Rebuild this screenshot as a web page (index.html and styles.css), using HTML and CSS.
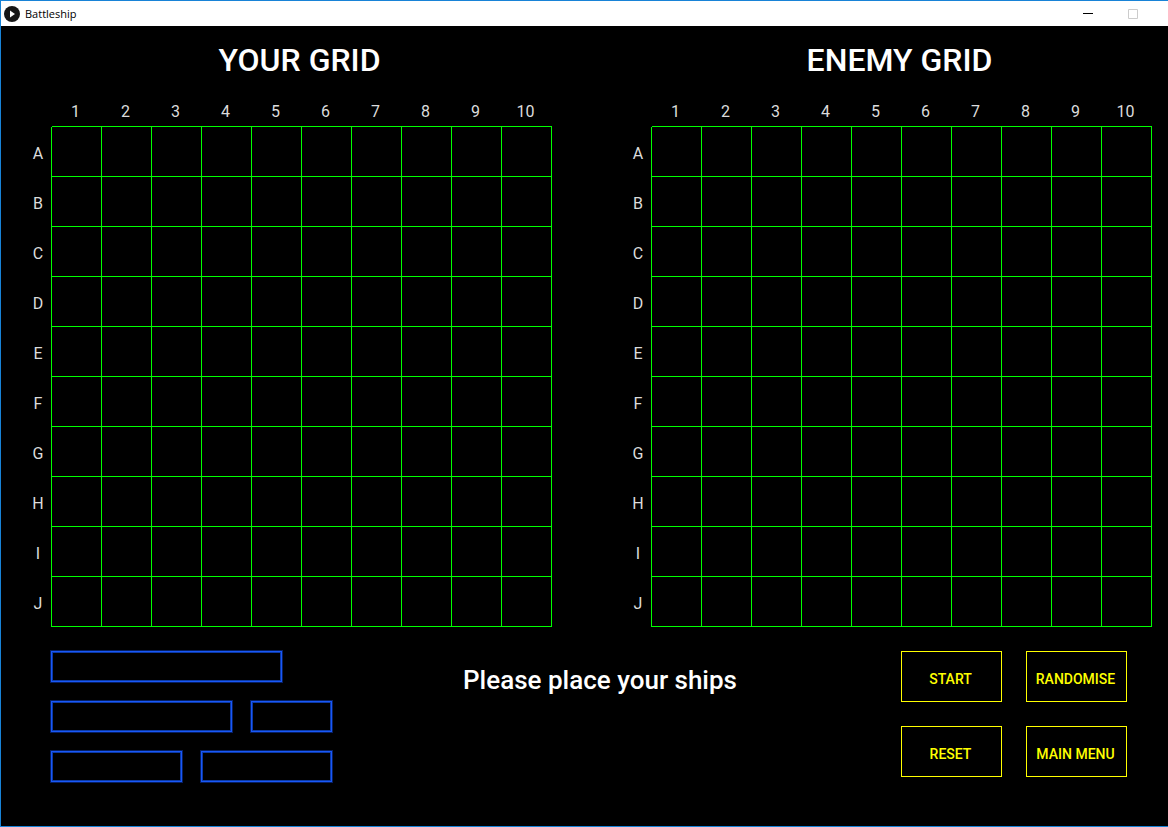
FILE: index.html
```html
<!DOCTYPE html>
<html lang="en">
<head>
<meta charset="utf-8">
<title>Battleship</title>
<link rel="stylesheet" href="styles.css">
</head>
<body>
<div class="window">
  <header class="titlebar">
    <svg class="app-icon" viewBox="0 0 16 16" aria-hidden="true"><circle cx="8" cy="8" r="8" fill="#161616"/><path d="M6 4.500v7l5-3.500z" fill="#fff"/></svg>
    <h1 class="app-name">Battleship</h1>
    <button class="window-button" type="button" aria-label="Minimise"><svg viewBox="0 0 10 10" aria-hidden="true"><path d="M0 4.500h10" stroke="#000"/></svg></button>
    <button class="window-button" type="button" aria-label="Maximise" disabled><svg viewBox="0 0 10 10" aria-hidden="true"><path d="M.5.5h9v9h-9z" fill="none" stroke="#ccc"/></svg></button>
  </header>
  <main>
    <div class="boards">
      <section class="board"><h2 class="board-title">YOUR GRID</h2><table class="grid"></table></section>
      <section class="board"><h2 class="board-title">ENEMY GRID</h2><table class="grid"></table></section>
    </div>
    <div class="controls">
      <div class="fleet">
        <div class="fleet-row"><div class="ship ship-5"></div></div>
        <div class="fleet-row"><div class="ship ship-4"></div><div class="ship ship-2"></div></div>
        <div class="fleet-row"><div class="ship ship-3"></div><div class="ship ship-3"></div></div>
      </div>
      <p class="message">Please place your ships</p>
      <div class="actions">
        <button class="action" type="button">START</button>
        <button class="action" type="button">RANDOMISE</button>
        <button class="action" type="button">RESET</button>
        <button class="action" type="button">MAIN MENU</button>
      </div>
    </div>
  </main>
</div>
<script src="board.js"></script>
</body>
</html>
```
FILE: styles.css
```css
* { box-sizing: border-box; }
body { margin: 0; background: #000; font-family: Roboto, "Liberation Sans", sans-serif; }
h1, h2, p { margin: 0; font-weight: 400; }
button { font: inherit; }
.window { min-height: 100vh; border: 1px solid #1883d7; border-right: 0; background: #000; }
.titlebar { display: flex; align-items: center; height: 25px; padding: 0 13px 0 3px; background: #fff; }
.app-icon { width: 16px; height: 16px; }
.app-name { flex: 1; padding-left: 5px; font: 11px "Open Sans", "Noto Sans", sans-serif; color: #000; }
.window-button { display: grid; place-items: center; width: 45px; height: 24px; padding: 0; border: 0; background: none; }
.window-button svg { width: 10px; height: 10px; }
.boards { display: grid; grid-template-columns: 1fr 1fr; gap: 49px; padding-right: 16px; }
.board-title { padding-left: 46px; font-size: 32px; font-weight: 500; line-height: 68px; text-align: center; color: #fff; }
.grid { width: 100%; border-spacing: 0; table-layout: fixed; color: #dcdcdc; font-size: 16px; line-height: 16px; }
.grid th { padding: 0; font-weight: 400; }
.grid thead th { height: 33px; padding: 3px 3px 0 0; border-bottom: 1px solid #0f0; }
.grid thead .corner { width: 51px; border-bottom: 0; }
.grid tbody th { height: 50px; padding: 4px 0 0 24px; text-align: center; border-right: 1px solid #0f0; }
.grid td { padding: 0; border: solid #0f0; border-width: 0 1px 1px 0; }
.controls { display: grid; grid-template-columns: 1fr auto 1fr; padding: 24px 41px 24px 50px; }
.fleet { display: grid; align-content: start; gap: 19px; }
.fleet-row { display: flex; gap: 19px; }
.ship { height: 31px; border: 1px solid #1858f8; box-shadow: 0 0 0 1px #081f60, inset 0 0 0 1px #0e3aa4; }
.ship-5 { width: 231px; }
.ship-4 { width: 181px; }
.ship-3 { width: 131px; }
.ship-2 { width: 81px; }
.message { padding: 13px 0 0 22px; font-size: 26px; font-weight: 500; line-height: 32px; color: #fff; }
.actions { display: grid; grid-template-columns: 101px 101px; justify-content: end; align-content: start; gap: 24px; }
.action { height: 51px; padding: 4px 2px 0 0; border: 1px solid #ff0; background: #000; color: #ff0; font-size: 14px; font-weight: 500; }
```
FILE: board.js
```javascript
const columns = [1, 2, 3, 4, 5, 6, 7, 8, 9, 10];
const head = columns.map((n) => `<th scope="col">${n}</th>`).join("");
const rows = [..."ABCDEFGHIJ"]
  .map((r) => `<tr><th scope="row">${r}</th>${"<td></td>".repeat(columns.length)}</tr>`)
  .join("");
document.querySelectorAll(".grid").forEach((grid) => {
  grid.innerHTML = `<thead><tr><th class="corner"></th>${head}</tr></thead><tbody>${rows}</tbody>`;
});
```
